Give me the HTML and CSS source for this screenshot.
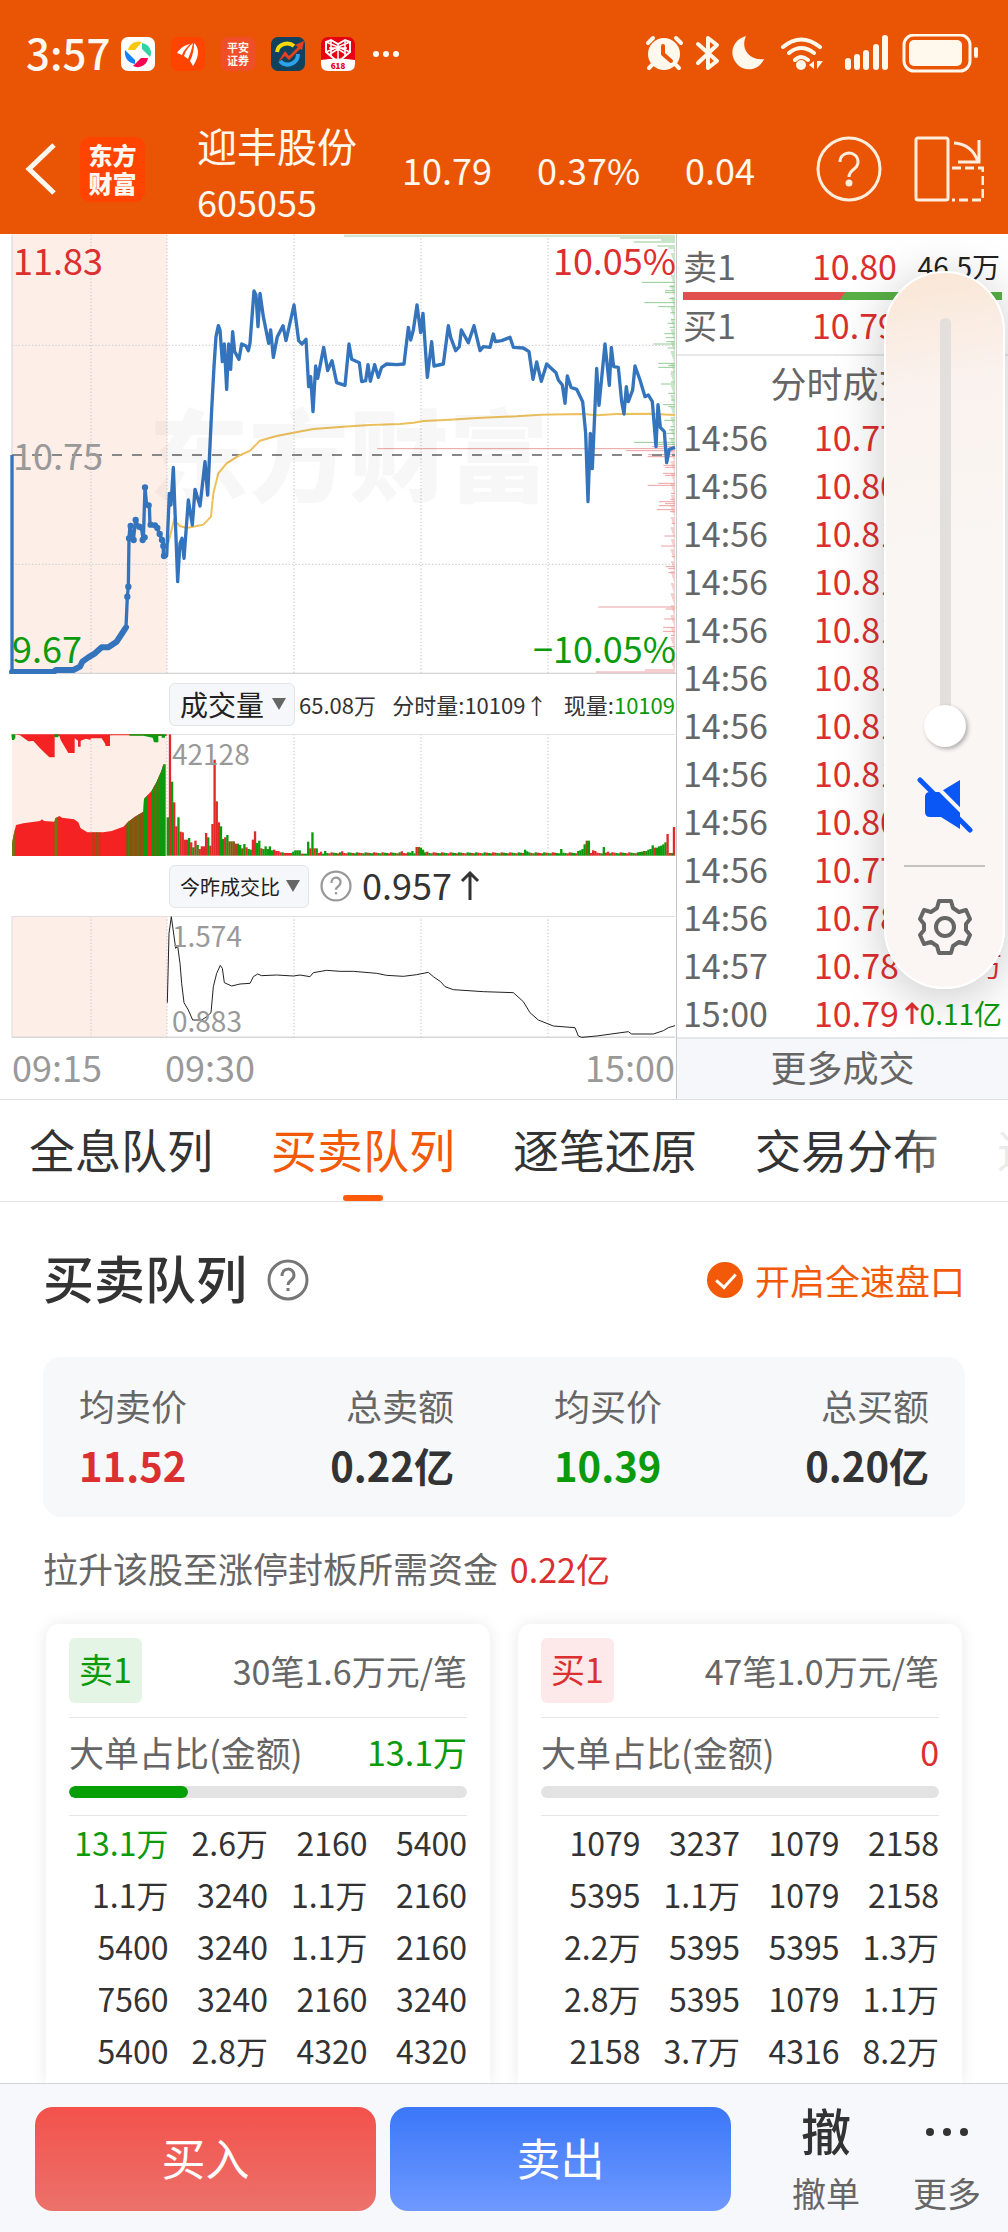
FILE: index.html
```html
<!DOCTYPE html>
<html lang="zh-CN">
<head>
<meta charset="utf-8">
<meta name="viewport" content="width=device-width, initial-scale=1">
<title>迎丰股份 605055</title>
<link rel="stylesheet" href="styles.css">
</head>
<body>
<header class="top">
  <div class="status">
    <span class="status-time">3:57</span>
    <div class="status-apps">
      <svg class="app" viewBox="0 0 34 34"><rect width="34" height="34" rx="7" fill="#fff"/><path d="M7 13C8 6 16 3 21 5L14 13Z" fill="#f9c80e"/><path d="M21 6C28 7 32 14 29 20L21 12Z" fill="#2fd3a5"/><path d="M27 21C26 29 17 32 12 29L20 21Z" fill="#f5064f"/><path d="M4 13L14 23V27C6 26 3 19 4 13Z" fill="#1283f7"/></svg>
      <svg class="app" viewBox="0 0 34 34"><rect width="34" height="34" rx="7" fill="#ff4400"/><path d="M6 16C9 11 14 8 19 7C16 10 13 13 11 18ZM13 19C15 13 18 9 22 6C21 12 19 17 17 22ZM19 24C22 18 23 12 23 6C28 10 29 19 22 29Z" fill="#fff"/></svg>
      <span class="app app-text">平安<br>证券</span>
      <svg class="app" viewBox="0 0 34 34"><rect width="34" height="34" rx="7" fill="#10425e"/><path d="M6 15C7 7 17 4 23 9" fill="none" stroke="#f5d90a" stroke-width="4"/><path d="M27 17C27 27 15 31 9 24" fill="none" stroke="#2ba2ea" stroke-width="4"/><path d="M7 25L14 14L18 19L27 10L24 8L33 4L31 13L29 12L18 23L14 19Z" fill="#e8401c"/></svg>
      <svg class="app" viewBox="0 0 34 34"><rect width="34" height="34" rx="7" fill="#e60012"/><path d="M0 23Q17 20 34 23V27Q34 34 27 34H7Q0 34 0 27Z" fill="#fff"/><path d="M17 25L5 15V5L10 3L17 7L24 3L29 5V15Z" fill="none" stroke="#fff" stroke-width="2"/><path d="M5 5L29 15M29 5L5 15M10 3V19M24 3V19M17 7V24M8 11H26M9 17L17 12L25 17" fill="none" stroke="#fff" stroke-width="1.5"/><text x="17" y="32" class="app-618">618</text></svg>
    </div>
    <svg class="more-dots" viewBox="0 0 26 6" fill="#fff"><circle cx="3" cy="3" r="3"/><circle cx="13" cy="3" r="3"/><circle cx="23" cy="3" r="3"/></svg>
    <svg class="status-icons" viewBox="0 0 336 40" fill="#fff8ec" stroke="#fff8ec" stroke-linecap="round" stroke-linejoin="round">
      <circle cx="20" cy="20" r="16" stroke="none"/><path d="M4 9L9 4M32 4L37 9M8 31L5 34M32 31L35 34" stroke-width="4" fill="none"/><path d="M19 12V20L27 27" fill="none" stroke="#e95504" stroke-width="4"/>
      <path d="M54 10L73 27L64 34V4L73 11L54 29" fill="none" stroke-width="4"/>
      <path d="M102 2C96 15 106 27 120 25C115 37 101 38 94 31C84 21 88 6 102 2Z" stroke="none"/>
      <path d="M139 13Q157-2 176 13M145 19Q157 9 170 19M151 26Q157 20 164 26" fill="none" stroke-width="4"/><circle cx="157" cy="31" r="5" stroke="none"/><path d="M165 31L170 27V35ZM173 27H179L173 35Z" stroke="none"/>
      <path d="M204 27V33M213 23V33M222 19V33M232 13V33M241 4V33" fill="none" stroke-width="6"/>
      <rect x="260" y="1" width="66" height="36" rx="10" fill="none" stroke-width="3"/><rect x="265" y="6" width="53" height="26" rx="5" stroke="none"/><path d="M332 15V22" stroke-width="4"/>
    </svg>
  </div>
  <div class="nav">
    <button class="icon-btn" aria-label="返回"><svg class="back" viewBox="0 0 32 52"><path d="M30 2L5 26L30 50" fill="none" stroke="#fff8f0" stroke-width="5"/></svg></button>
    <a class="logo" href="#">东方<br>财富</a>
    <div class="quote">
      <h1 class="stock"><span class="stock-name">迎丰股份</span><span class="stock-code">605055</span></h1>
      <span>10.79</span><span>0.37%</span><span>0.04</span>
    </div>
    <div class="nav-actions">
      <button class="icon-btn" aria-label="帮助"><svg class="help-lg" viewBox="0 0 66 66" fill="none" stroke="#ffeedd" stroke-width="3"><circle cx="33" cy="33" r="31"/><path d="M24 26C24 14 42 14 42 26C42 34 33 33 33 41"/><circle cx="33" cy="47" r="2" fill="#ffeedd"/></svg></button>
      <button class="icon-btn" aria-label="横屏"><svg class="rotate" viewBox="0 0 70 66" fill="none" stroke="#ffeedd" stroke-width="3"><rect x="2" y="2" width="32" height="62" rx="2"/><path d="M40 7Q58 8 64 26M44 26H65V4"/><path d="M38 32H69V64H38" stroke-dasharray="9 4"/></svg></button>
    </div>
  </div>
</header>

<section class="market">
  <div class="charts">
    <div class="plot plot-price">
      <span class="watermark">东方财富</span>
      <svg viewBox="0 12 2028 1320" preserveAspectRatio="none">
        <rect x="36" y="12" width="465" height="1320" fill="#fdeee7"/>
        <g class="grid"><path d="M273 15V1330M501 15V1330M882 15V1330M1263 15V1330M1644 15V1330M36 346H2025M36 1003H2025"/></g>
        <path d="M36 15V1330" stroke="#dcdcdc" stroke-width="4"/><path d="M36 1331H2028" stroke="#d4d4d4" stroke-width="5"/>
        <g id="profile" stroke-width="3"></g>
        <path d="M36 675H2025" stroke="#888" stroke-width="6" stroke-dasharray="30 30"/>
        <polyline fill="none" stroke="#edc05c" stroke-width="6" points="505,940 522,870 540,888 560,894 590,888 610,884 633,860 640,790 655,730 680,700 715,678 750,662 780,632 830,618 880,608 940,597 1050,589 1110,585 1200,582 1240,578 1270,573 1350,569 1430,564 1550,559 1620,554 1750,552 1790,556 1850,552 1950,551 2025,555"/>
        <polyline class="line-early" points="36,1326 160,1326 168,1320 220,1320 240,1310 247,1295 265,1282 285,1270 305,1252 325,1252 350,1235 365,1212 378,1192"/>
        <polyline class="line-price" points="36,675 36,1326"/>
        <polyline class="line-price" points="378,1192 382,1100 385,1070 387,925 390,888 400,930 407,870 415,890 425,900 430,930 435,772 440,826 448,826 450,884 470,888 478,912 490,935 490,978 500,978 508,790 513,825 520,712 533,1055 540,940 546,925 552,985 565,810 577,885 585,778 600,828 615,695 623,795 635,540 642,410 648,320 655,287 660,300 667,395 673,342 680,478 686,342 692,418 698,305 704,365 717,388 725,342 738,348 745,362 750,340 762,183 768,195 774,290 780,190 790,260 806,340 812,300 820,382 832,320 849,287 858,332 882,225 896,332 906,342 918,328 926,470 932,440 939,545 947,408 953,445 971,352 983,422 996,392 1010,458 1035,466 1047,342 1055,388 1078,398 1085,455 1097,452 1104,404 1111,454 1124,404 1135,442 1145,412 1160,402 1190,404 1212,402 1225,292 1232,330 1240,300 1251,225 1262,308 1269,250 1282,442 1295,335 1302,408 1330,402 1345,287 1352,322 1367,362 1378,350 1384,300 1405,338 1422,287 1440,362 1450,350 1470,352 1480,312 1486,335 1505,332 1530,322 1540,352 1570,354 1587,365 1599,448 1610,396 1624,454 1640,402 1668,428 1675,450 1687,465 1695,520 1702,438 1713,472 1730,478 1748,515 1757,610 1764,815 1771,610 1777,716 1790,415 1797,526 1815,342 1828,466 1834,352 1841,410 1855,412 1865,515 1872,552 1879,470 1885,515 1898,480 1905,408 1920,450 1935,500 1945,495 1957,515 1968,650 1974,524 1981,592 1993,605 2000,698 2008,658 2025,652"/>
        <path class="line-dots" d="M382 1100h0M385 1070h0M387 925h0M392 888h0M401 930h0M407 870h0M418 890h0M428 930h0M435 772h0M446 826h0M434 922h0M452 884h0M465 886h0M472 894h0M479 912h0M486 930h0M490 948h0M492 978h0"/>
      </svg>
      <span class="tag tag-tl up">11.83</span><span class="tag tag-tr up">10.05%</span>
      <span class="tag tag-mid">10.75</span>
      <span class="tag tag-bl down">9.67</span><span class="tag tag-br down">−10.05%</span>
    </div>
    <div class="indicator">
      <span class="picker"><select class="wide" aria-label="指标一"><option>成交量</option></select></span>
      <div class="figures"><span>65.08万</span><span>分时量:10109↑</span><span>现量:<b class="down">10109</b></span></div>
    </div>
    <div class="plot plot-sub">
      <svg viewBox="0 192 2028 366" preserveAspectRatio="none">
        <rect x="36" y="192" width="465" height="366" fill="#fdeee7"/>
        <g class="grid"><path d="M273 192V558M501 192V558M882 192V558M1263 192V558M1644 192V558"/></g>
        <path d="M36 193H2025" stroke="#dcdcdc" stroke-width="3"/>
        <clipPath id="auction"><path d="M36 558V520L42 490L48 465L70 460L120 453L126 448L132 453L163 455L166 445L178 438L186 443L222 448L235 457L242 475L262 487H310L335 483L370 470L385 455L405 440L430 425L432 387L455 362L470 335L485 300L490 283H497V558Z"/></clipPath>
        <g clip-path="url(#auction)">
          <rect x="36" y="192" width="465" height="366" fill="#f42222"/>
          <path d="M40 192V558M168 192V558" stroke="#6b7a10" stroke-width="9"/>
          <path d="M280 192V558M289 192V558M298 192V558" stroke="#8f5510" stroke-width="5"/>
          <rect x="378" y="192" width="52" height="366" fill="#8d5212"/>
          <rect x="430" y="192" width="14" height="366" fill="#0b9a0b"/>
          <rect x="455" y="192" width="46" height="366" fill="#0b9a0b"/>
          <path d="M386 192V558M400 192V558M414 192V558" stroke="#4f7a10" stroke-width="4"/><path d="M462 192V558M473 192V558" stroke="#7e5c10" stroke-width="5"/>
        </g>
        <path d="M40 193H500V198H460V196H330V228H316V222L305 205H272V210L258 206L242 212V230H234V212L224 205V249H205L182 210L178 198H164V262H148L120 235L100 213L85 214L60 196Z" fill="#f42222"/>
        <path d="M34 193H46V203L42 210H36ZM163 193H175V202H163ZM388 193H495V203H485V197H475V217H462L458 203L430 197H388Z" fill="#0b9a0b"/>
        <g id="volume"></g>
      </svg>
      <span class="note note-top">42128</span>
    </div>
    <div class="indicator">
      <span class="picker"><select class="narrow" aria-label="指标二"><option>今昨成交比</option></select></span>
      <svg class="help-sm gray" viewBox="0 0 42 42"><use href="#q"/></svg>
      <span class="ratio">0.957</span><svg class="arrow" viewBox="0 0 20 30"><path d="M10 29V2M2 10L10 2L18 10" fill="none" stroke="#333" stroke-width="3"/></svg>
    </div>
    <div class="plot plot-sub">
      <svg viewBox="0 738 2028 366" preserveAspectRatio="none">
        <rect x="36" y="738" width="465" height="366" fill="#fdeee7"/>
        <g class="grid"><path d="M273 738V1104M501 738V1104M882 738V1104M1263 738V1104M1644 738V1104"/></g>
        <path d="M36 1102V739H2025" fill="none" stroke="#dcdcdc" stroke-width="3"/><path d="M36 1102H2025" stroke="#d8d8d8" stroke-width="5"/>
        <polyline fill="none" stroke="#222" stroke-width="3" points="502,998 507,790 514,740 527,835 533,828 540,880 545,940 552,998 565,1020 578,1050 605,1050 620,1040 633,1028 640,950 650,910 661,886 667,895 673,938 695,948 720,942 750,940 760,920 773,912 785,917 830,915 880,918 900,915 930,920 940,908 980,901 1020,904 1060,904 1130,910 1160,916 1210,919 1250,914 1285,907 1300,920 1322,935 1335,950 1360,959 1450,965 1540,968 1570,995 1590,1028 1615,1050 1660,1068 1725,1073 1735,1098 1745,1102 1790,1098 1885,1085 1895,1092 1960,1092 1990,1082 2005,1073 2025,1067"/>
      </svg>
      <span class="note note-top">1.574</span><span class="note note-bottom">0.883</span>
    </div>
    <div class="axis"><span class="axis-a">09:15</span><span class="axis-b">09:30</span><span>15:00</span></div>
  </div>

  <div class="book">
    <div class="level level-sell"><span>卖1</span><span class="up">10.80</span><span class="amount">46.5万</span></div>
    <div class="balance"></div>
    <div class="level level-buy"><span>买1</span><span class="up">10.79</span><span></span></div>
    <h2 class="book-title">分时成交</h2>
    <table class="ticks">
      <tbody>
      <tr><td>14:56</td><td class="up">10.77</td><td></td></tr>
      <tr><td>14:56</td><td class="up">10.80</td><td></td></tr>
      <tr><td>14:56</td><td class="up">10.81</td><td></td></tr>
      <tr><td>14:56</td><td class="up">10.81</td><td></td></tr>
      <tr><td>14:56</td><td class="up">10.81</td><td></td></tr>
      <tr><td>14:56</td><td class="up">10.81</td><td></td></tr>
      <tr><td>14:56</td><td class="up">10.81</td><td></td></tr>
      <tr><td>14:56</td><td class="up">10.81</td><td></td></tr>
      <tr><td>14:56</td><td class="up">10.80</td><td></td></tr>
      <tr><td>14:56</td><td class="up">10.77</td><td></td></tr>
      <tr><td>14:56</td><td class="up">10.78</td><td></td></tr>
      <tr><td>14:57</td><td class="up">10.78</td><td class="up">万</td></tr>
      <tr><td>15:00</td><td class="up">10.79</td><td class="down"><svg class="tick-arrow" viewBox="0 0 16 24"><path d="M8 23V3M2 9L8 3L14 9" fill="none" stroke="#e03030" stroke-width="3"/></svg>0.11亿</td></tr>
      </tbody>
    </table>
    <button class="more">更多成交</button>
  </div>

  <aside class="volume-panel">
    <div class="slider"><input type="range" min="0" max="100" value="0" aria-label="音量"></div>
    <button class="icon-btn" aria-label="静音"><svg class="mute" viewBox="0 0 56 56"><path d="M13 15H23L43 3V52L24 40H13Q8 40 8 35V20Q8 15 13 15Z" fill="#0b57f5"/><path d="M7 -3L60 50" stroke="#faf6f3" stroke-width="4"/><path d="M3 3L53 53" stroke="#0b57f5" stroke-width="5" stroke-linecap="round"/></svg></button>
    <hr>
    <button class="icon-btn" aria-label="设置"><svg class="gear" viewBox="0 0 54 56" fill="none" stroke="#666" stroke-width="4" stroke-linejoin="round"><path d="M21 2H33L35 9L41 13L48 11L52 20L48 25V31L52 36L48 45L41 43L35 47L33 54H21L19 47L13 43L6 45L2 36L6 31V25L2 20L6 11L13 13L19 9Z"/><circle cx="27" cy="28" r="9"/></svg></button>
  </aside>
</section>

<nav class="tabs">
  <a href="#">全息队列</a><a href="#" class="active" aria-current="page">买卖队列</a><a href="#">逐笔还原</a><a href="#">交易分布</a><a href="#">逐笔</a>
</nav>

<main class="queue">
  <div class="queue-head">
    <h2>买卖队列</h2>
    <svg class="help-md" viewBox="0 0 42 42"><g id="q" fill="none" stroke="currentColor" stroke-width="3"><circle cx="21" cy="21" r="19"/><path d="M15 17C15 8 27 8 27 16C27 22 21 21 21 26"/><path d="M21 29V32"/></g></svg>
    <label class="fast"><input type="checkbox" checked>开启全速盘口</label>
  </div>

  <div class="summary">
    <dl><div><dt>均卖价</dt><dd class="up">11.52</dd></div><div class="end"><dt>总卖额</dt><dd>0.22亿</dd></div></dl>
    <dl><div><dt>均买价</dt><dd class="down">10.39</dd></div><div class="end"><dt>总买额</dt><dd>0.20亿</dd></div></dl>
  </div>

  <p class="funds">拉升该股至涨停封板所需资金 <span class="up">0.22亿</span></p>

  <div class="cards">
    <section class="card">
      <div class="card-head"><span class="badge badge-sell">卖1</span><span>30笔1.6万元/笔</span></div>
      <div class="card-ratio"><span>大单占比(金额)</span><span class="value down">13.1万</span></div>
      <div class="bar"><div class="bar-fill" style="width:30%"></div></div>
      <table class="orders">
        <tbody>
        <tr><td class="down">13.1万</td><td>2.6万</td><td>2160</td><td>5400</td></tr>
        <tr><td>1.1万</td><td>3240</td><td>1.1万</td><td>2160</td></tr>
        <tr><td>5400</td><td>3240</td><td>1.1万</td><td>2160</td></tr>
        <tr><td>7560</td><td>3240</td><td>2160</td><td>3240</td></tr>
        <tr><td>5400</td><td>2.8万</td><td>4320</td><td>4320</td></tr>
        </tbody>
      </table>
    </section>
    <section class="card">
      <div class="card-head"><span class="badge badge-buy">买1</span><span>47笔1.0万元/笔</span></div>
      <div class="card-ratio"><span>大单占比(金额)</span><span class="value up">0</span></div>
      <div class="bar"></div>
      <table class="orders">
        <tbody>
        <tr><td>1079</td><td>3237</td><td>1079</td><td>2158</td></tr>
        <tr><td>5395</td><td>1.1万</td><td>1079</td><td>2158</td></tr>
        <tr><td>2.2万</td><td>5395</td><td>5395</td><td>1.3万</td></tr>
        <tr><td>2.8万</td><td>5395</td><td>1079</td><td>1.1万</td></tr>
        <tr><td>2158</td><td>3.7万</td><td>4316</td><td>8.2万</td></tr>
        </tbody>
      </table>
    </section>
  </div>
</main>

<footer class="actions">
  <button class="trade trade-buy">买入</button>
  <button class="trade trade-sell">卖出</button>
  <button class="tool"><span class="tool-glyph">撤</span><span>撤单</span></button>
  <button class="tool tool-last"><svg viewBox="0 0 44 60" class="tool-dots" fill="#333"><circle cx="5" cy="33" r="4"/><circle cx="22" cy="33" r="4"/><circle cx="39" cy="33" r="4"/></svg><span>更多</span></button>
</footer>
<script src="charts.js"></script>
</body>
</html>
```
FILE: styles.css
```css
* { box-sizing: border-box; }
body {
  margin: 0;
  background: #fff;
  color: #333;
  font-family: "Noto Sans CJK SC", "Noto Sans", sans-serif;
  font-size: 34px;
}
h1, h2, p, dl, dd { margin: 0; font-weight: 400; }
button, input, select { font: inherit; color: inherit; }
a { color: inherit; text-decoration: none; }
svg { display: block; }
table { border-collapse: collapse; }
td { padding: 0; }
.up { color: #dc2f2f; }
.down { color: #0b9a0b; }
.icon-btn { padding: 0; border: 0; background: none; }

/* header */
.top { background: #e95504; color: #fff8f0; }
.status { display: flex; align-items: center; height: 108px; padding: 0 28px 0 26px; }
.status-time { font-size: 42px; font-weight: 500; line-height: 44px; width: 95px; white-space: nowrap; padding-bottom: 4px; }
.status-apps { display: flex; gap: 16px; }
.app { width: 34px; height: 34px; }
.app-text { border-radius: 7px; background: #f04e28; font-size: 11px; line-height: 13px; padding-top: 4px; text-align: center; font-weight: 700; }
.app-618 { font-size: 8px; font-weight: 900; fill: #e60012; text-anchor: middle; }
.more-dots { width: 26px; margin-left: 18px; }
.status-icons { width: 336px; height: 40px; margin-left: auto; }
.nav { display: flex; align-items: center; height: 126px; padding: 0 24px 4px 24px; }
.back { width: 32px; height: 52px; }
.logo { width: 65px; height: 65px; margin-left: 24px; border-radius: 10px; background: #ff4400; font-size: 24px; font-weight: 900; line-height: 28px; padding-top: 4px; text-align: center; }
.quote { display: flex; align-items: center; gap: 45px; margin-left: 52px; font-size: 36px; white-space: nowrap; }
.stock { display: flex; flex-direction: column; padding-top: 8px; font-size: 36px; line-height: 56px; }
.stock-name { font-size: 40px; }
.nav-actions { display: flex; gap: 32px; margin-left: auto; }
.help-lg { width: 66px; height: 66px; }
.rotate { width: 70px; height: 66px; }

/* market */
.market { position: relative; display: grid; grid-template-columns: 676fr 332fr; border-bottom: 1px solid #dedfe2; }
.charts { min-width: 0; }
.plot { position: relative; }
.plot svg { width: 100%; height: 100%; }
.plot-price { height: 440px; }
.plot-sub { height: 122px; }
.grid { fill: none; stroke: #d2d2d2; stroke-width: 4; stroke-dasharray: 4 6; }
.line-price { fill: none; stroke: #3474bd; stroke-width: 10; stroke-linejoin: round; }
.line-early { fill: none; stroke: #3474bd; stroke-width: 18; stroke-linejoin: round; stroke-linecap: round; }
.line-dots { stroke: #3474bd; stroke-width: 19; stroke-linecap: round; }
.watermark { position: absolute; left: 22%; top: 162px; font-size: 100px; line-height: 110px; font-weight: 900; color: rgba(0, 0, 0, .03); white-space: nowrap; z-index: 1; }
.tag { position: absolute; font-size: 36px; line-height: 40px; }
.tag-tl { left: 13px; top: 5px; }
.tag-tr { right: 0; top: 5px; }
.tag-mid { left: 13px; top: 200px; color: #999; }
.tag-bl { left: 12px; bottom: 7px; }
.tag-br { right: 0; bottom: 7px; }
.note { position: absolute; left: 172px; font-size: 28px; line-height: 32px; color: #999; }
.note-top { top: 3px; }
.note-bottom { bottom: 2px; }
.indicator { display: flex; align-items: center; height: 60px; padding-left: 25%; }
.picker { position: relative; display: block; }
.picker::after { content: ""; position: absolute; right: 9px; top: 15px; border: 7px solid transparent; border-top: 12px solid #666; border-bottom: 0; pointer-events: none; }
.picker select { display: block; appearance: none; height: 43px; padding: 0 0 0 10px; border: 1px solid #e2e4e8; border-radius: 6px; background: #f6f7fa; color: #222; }
.picker .wide { width: 126px; font-size: 28px; }
.picker .narrow { width: 140px; font-size: 20px; }
.figures { flex: 1; display: flex; justify-content: space-between; padding: 0 1px 0 4px; font-size: 22px; white-space: nowrap; }
.figures b { font-weight: 400; }
.help-sm { width: 32px; height: 32px; margin: 0 10px 0 11px; }
.gray { color: #999; }
.ratio { font-size: 36px; line-height: 40px; padding-bottom: 4px; }
.arrow { width: 20px; height: 30px; margin-left: 8px; }
.axis { display: flex; height: 60px; line-height: 56px; padding: 0 1px 0 12px; font-size: 36px; color: #999; }
.axis-b { flex: 1; margin-left: 63px; }

/* order book */
.book { display: flex; flex-direction: column; border-left: 1px solid #c8c8c8; padding-top: 10px; color: #666; }
.level { display: grid; grid-template-columns: 129px 92px 1fr; padding: 0 8px 0 6px; white-space: nowrap; }
.level-sell { line-height: 44px; height: 48px; }
.level-buy { line-height: 50px; height: 56px; border-bottom: 2px solid #e8e8ea; }
.amount { font-size: 28px; text-align: right; color: #222; }
.balance { height: 8px; margin: 0 6px; background: linear-gradient(120deg, #e05050 50%, #58b045 50%); }
.book-title { font-size: 36px; line-height: 53px; padding-bottom: 4px; text-align: center; }
.ticks { width: 100%; table-layout: fixed; }
.ticks tr { height: 48px; line-height: 44px; }
.ticks td:first-child { width: 137px; padding-left: 6px; }
.ticks td:nth-child(2) { width: 86px; }
.ticks td:last-child { padding-right: 6px; font-size: 28px; text-align: right; white-space: nowrap; }
.tick-arrow { display: inline-block; width: 16px; height: 24px; }
.more { flex: 1; border: 0; border-top: 2px solid #e6e7ea; background: #f6f7fa; font-size: 36px; line-height: 54px; padding: 0 0 6px; }

/* floating volume control */
.volume-panel { position: absolute; top: 37px; right: 3px; width: 121px; display: flex; flex-direction: column; align-items: center; padding: 45px 0 32px; border: 2px solid #fff; border-radius: 61px; background: linear-gradient(170deg, #fae6d5 0, #faf2ee 16%, #faf6f3 40%, #fbf6f3 100%); box-shadow: 0 8px 50px rgba(0, 0, 0, .22); z-index: 2; }
.slider { position: relative; height: 429px; width: 42px; }
.slider::before { content: ""; position: absolute; left: 16px; top: 0; bottom: 20px; width: 11px; border-radius: 6px; background: #e3dfdc; }
.slider input { position: relative; display: block; appearance: none; writing-mode: vertical-lr; direction: rtl; width: 42px; height: 429px; margin: 0; background: none; }
.slider input::-webkit-slider-thumb { appearance: none; width: 42px; height: 42px; border-radius: 50%; background: #fff; box-shadow: 2px 2px 4px rgba(0, 0, 0, .3); }
.mute { width: 56px; height: 56px; margin-top: 30px; }
.volume-panel hr { width: 81px; height: 2px; margin: 32px 0; border: 0; background: #c6c2bf; }
.gear { width: 54px; height: 56px; }

/* tabs */
.tabs { position: relative; display: flex; gap: 58px; height: 102px; padding-left: 29px; overflow: hidden; border-bottom: 1px solid #e0e0e0; font-size: 46px; line-height: 96px; white-space: nowrap; }
.tabs a { position: relative; flex: none; }
.tabs .active { color: #f25a0a; }
.tabs .active::after { content: ""; position: absolute; left: 50%; bottom: 0; width: 40px; margin-left: -20px; height: 6px; border-radius: 3px; background: #ff5a0a; }
.tabs::after { content: ""; position: absolute; right: 0; top: 0; width: 110px; height: 100px; background: linear-gradient(90deg, rgba(255, 255, 255, 0), rgba(255, 255, 255, .9) 90%); }

/* queue */
.queue { padding: 44px 43px 0; }
.queue-head { display: flex; align-items: center; height: 68px; }
.queue-head h2 { font-size: 51px; font-weight: 500; line-height: 60px; padding-bottom: 6px; }
.help-md { width: 42px; height: 42px; margin-left: 20px; color: #777; }
.fast { display: flex; align-items: center; gap: 12px; margin-left: auto; font-size: 35px; line-height: 44px; color: #f25a0a; }
.fast input { appearance: none; position: relative; width: 36px; height: 36px; margin: 0; border-radius: 50%; background: #f25a0a; }
.fast input:checked::after { content: ""; position: absolute; left: 13px; top: 7px; width: 9px; height: 16px; border: solid #fff; border-width: 0 3px 3px 0; transform: rotate(42deg); }
.summary { display: flex; gap: 100px; margin-top: 43px; padding: 20px 36px 20px; border-radius: 18px; background: #f7f8fa; }
.summary dl { flex: 1; display: flex; justify-content: space-between; }
.summary dt { font-size: 36px; line-height: 56px; color: #666; }
.summary dd { font-size: 40px; line-height: 64px; font-weight: 700; }
.end { text-align: right; }
.funds { margin-top: 27px; font-size: 35px; line-height: 48px; color: #666; }
.funds span { margin-left: 4px; font-size: 34px; }
.cards { display: grid; grid-template-columns: 1fr 1fr; gap: 28px; margin-top: 31px; padding: 0 3px; }
.card { padding: 14px 23px 7px; border-radius: 14px 14px 0 0; background: #fff; box-shadow: 0 0 16px rgba(0, 0, 0, .09); color: #666; }
.card-head { display: flex; justify-content: space-between; align-items: center; padding-bottom: 14px; border-bottom: 1px solid #e6e6e6; line-height: 60px; white-space: nowrap; }
.badge { width: 73px; line-height: 61px; padding-bottom: 4px; border-radius: 6px; text-align: center; }
.badge-sell { background: #e5f5e5; color: #0b9a0b; }
.badge-buy { background: #fde9e9; color: #dc2f2f; }
.card-ratio { display: flex; justify-content: space-between; height: 68px; font-size: 35px; line-height: 68px; white-space: nowrap; }
.value { font-size: 34px; }
.bar { height: 12px; margin-bottom: 17px; border-radius: 6px; overflow: hidden; background: #e3e3e3; }
.bar-fill { height: 100%; border-radius: 6px; background: #06a006; }
.orders { width: 100%; table-layout: fixed; border-top: 1px solid #e6e6e6; font-size: 32px; line-height: 48px; color: #333; }
.orders tr { height: 52px; }
.orders td { text-align: right; }
.orders .down { color: #0b9a0b; }

/* bottom bar */
.actions { position: sticky; bottom: 0; display: flex; height: 151px; padding: 23px 27px 0 35px; gap: 14px; border-top: 1px solid #d0d5da; background: #f6f8fb; z-index: 3; }
.trade { flex: 1; height: 104px; padding: 0 0 4px; border: 0; border-radius: 18px; font-size: 44px; color: #fff; }
.trade-buy { background: linear-gradient(#f3524b, #ec716b); }
.trade-sell { background: linear-gradient(#3b77f8, #6f99ff); }
.tool { display: flex; flex-direction: column; align-items: center; width: 68px; margin-left: 47px; padding: 0; border: 0; background: none; color: #666; font-size: 34px; line-height: 56px; white-space: nowrap; }
.tool-last { margin-left: 39px; }
.tool-glyph { font-size: 50px; line-height: 60px; margin-top: -8px; color: #333; font-weight: 500; }
.tool-dots { width: 44px; height: 60px; margin-top: -8px; }
.tool span:last-child { margin-top: 6px; }
```
FILE: charts.js
```js
const NS = 'http://www.w3.org/2000/svg';
function add(parent, name, attrs) {
  const el = document.createElementNS(NS, name);
  for (const key in attrs) el.setAttribute(key, attrs[key]);
  parent.appendChild(el);
}

// turnover by price level: y position and bar length, measured from the right edge
const levels = [[24,165],[30,42],[36,124],[48,53],[54,20],[157,100],[170,18],[182,30],[188,30],[206,18],[218,92],[230,50],[248,14],[268,12],[280,22],[292,16],[311,32],[323,28],[335,26],[342,65],[354,22],[400,50],[406,20],[412,50],[426,12],[456,12],[462,42],[490,20],[510,12],[524,36],[530,20],[571,32],[590,14],[600,18],[610,26],[626,18],[637,123],[643,60],[650,68],[656,893],[662,147],[674,80],[680,82],[706,35],[712,30],[730,36],[736,30],[760,50],[766,82],[790,12],[808,14],[815,48],[821,30],[827,48],[839,55],[845,15],[880,10],[918,32],[948,42],[980,10],[1010,28],[1016,20],[1028,20],[1131,230],[1137,28],[1167,32],[1192,36],[1204,36],[1216,12],[1250,18],[1290,10],[1320,90],[1326,237]];
const profile = document.getElementById('profile');
add(profile, 'rect', { x: 1032, y: 14, width: 993, height: 7, fill: '#cfe6cc' });
for (let y = 60; y < 1320; y += 6) levels.push([y, 3 + (y * 7) % 11]);
for (const [y, len] of levels) {
  add(profile, 'path', { d: `M${2025 - len} ${y}H2025`, stroke: y < 648 ? '#93cb93' : '#eca0a0' });
}

// minute volume: colour letter and bar height
const minutes = ('g115 r364 g222 r160 r88 g115 r72 r70 r48 r48 g53 r40 g25 r45 g32 r20 r28 r28 r68 g55 r30 r95 r288 r163 r100 g88 g50 r55 g62 ' +
  'b43 b43 b43 r36 g36 g32 b22 g35 r25 g20 g18 r48 r73 g38 g45 r22 g20 g28 g20 g28 g16 r18 r14 r14 r10 g10 r8 r8 r8 r8 g12 g16 g16 g16 ' +
  'r6 g6 g6 g42 r22 g70 r22 g22 r8 r12 g6 g14').split(' ');
for (let i = minutes.length; i < 241; i++) minutes.push((i * 5 % 7 < 3 ? 'r' : 'g') + (7 + (i * 3) % 4));
const peaks = { 82: 'r13', 110: 'r13', 115: 'g14', 117: 'r26', 118: 'b26', 119: 'g24', 120: 'g18', 122: 'r12', 168: 'g18', 169: 'g13', 170: 'g10', 185: 'g20', 193: 'g14', 194: 'g16', 195: 'g20', 196: 'g34', 197: 'b45', 198: 'g45', 200: 'r16', 201: 'r14', 205: 'g26', 207: 'r12', 222: 'g11', 223: 'g12', 224: 'b14', 225: 'g14', 226: 'g18', 227: 'g20', 228: 'g31', 229: 'r24', 230: 'g24', 231: 'g28', 232: 'g30', 233: 'g34', 234: 'g40', 235: 'r65', 236: 'r8', 237: 'g8', 238: 'r86' };
Object.assign(minutes, peaks);
minutes.length = 239;
const colours = { r: '#e02a2a', g: '#0b9a0b', b: '#7e5c10' };
const volume = document.getElementById('volume');
minutes.forEach((bar, i) => {
  const h = Number(bar.slice(1));
  add(volume, 'rect', { x: 500 + i * 6.38, y: 557 - h, width: 7, height: h, fill: colours[bar[0]] });
});
```
